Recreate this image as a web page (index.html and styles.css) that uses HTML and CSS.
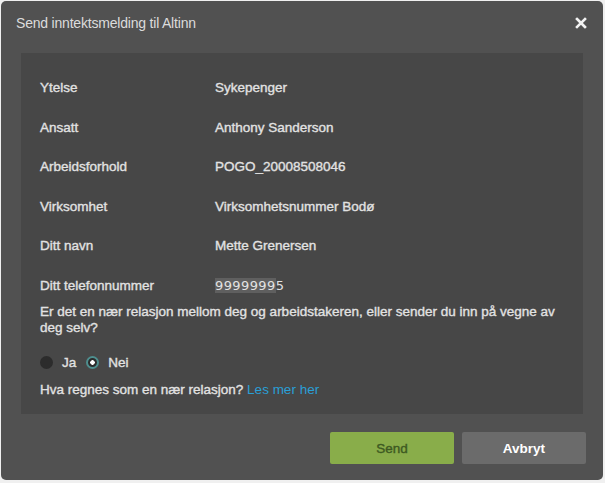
FILE: index.html
```html
<!DOCTYPE html>
<html lang="no">
<head>
<meta charset="UTF-8">
<meta name="viewport" content="width=device-width, initial-scale=1.0">
<title>Send inntektsmelding til Altinn</title>
<link rel="stylesheet" href="styles.css">
</head>
<body>
<div class="dialog">
    <div class="dialog-header">
        <h2>Send inntektsmelding til Altinn</h2>
        <svg class="close-btn" width="12" height="12" viewBox="0 0 12 12">
            <path d="M2 2 L10 10 M10 2 L2 10" stroke="#f2f2f2" stroke-width="2.6" stroke-linecap="square"/>
        </svg>
    </div>
    <div class="panel">
        <div class="info-row"><span class="label">Ytelse</span><span class="value">Sykepenger</span></div>
        <div class="info-row"><span class="label">Ansatt</span><span class="value">Anthony Sanderson</span></div>
        <div class="info-row"><span class="label">Arbeidsforhold</span><span class="value">POGO_20008508046</span></div>
        <div class="info-row"><span class="label">Virksomhet</span><span class="value">Virksomhetsnummer Bodø</span></div>
        <div class="info-row"><span class="label">Ditt navn</span><span class="value">Mette Grenersen</span></div>
        <div class="info-row"><span class="label">Ditt telefonnummer</span><span class="value phone"><span class="phone-mark">9999999</span>5</span></div>
        <p class="question">Er det en nær relasjon mellom deg og arbeidstakeren, eller sender du inn på vegne av deg selv?</p>
        <div class="radios">
            <label class="radio"><span class="dot"></span>Ja</label>
            <label class="radio"><span class="dot checked"></span>Nei</label>
        </div>
        <p class="help">Hva regnes som en nær relasjon? <a href="#">Les mer her</a></p>
    </div>
    <div class="dialog-footer">
        <button class="btn btn-send">Send</button>
        <button class="btn btn-cancel">Avbryt</button>
    </div>
</div>
</body>
</html>
```

FILE: styles.css
```css
body {
    font-family: "Liberation Sans", Arial, sans-serif;
    margin: 0;
    padding: 1px;
    background-color: #f0f0f0;
}
.dialog {
    width: 602px;
    height: 479px;
    box-sizing: border-box;
    background-color: #515151;
    border-radius: 5px;
    display: flex;
    flex-direction: column;
}
.dialog-header {
    height: 44px;
    padding: 0 16px 0 15px;
    display: flex;
    align-items: center;
    justify-content: space-between;
}
h2 {
    margin: 0;
    font-size: 14px;
    font-weight: normal;
    color: #dcdcdc;
    letter-spacing: -0.2px;
}
.panel {
    margin: 8px 20px 0 20px;
    height: 361px;
    box-sizing: border-box;
    background-color: #474747;
    padding: 15px 19px 0 19px;
    color: #e2e2e2;
    font-size: 13.5px;
    -webkit-text-stroke: 0.35px #e2e2e2;
}
.info-row {
    display: flex;
    height: 39.5px;
    align-items: center;
}
.label {
    width: 175px;
}
.phone {
    font-family: "DejaVu Sans", sans-serif;
    font-size: 13px;
    letter-spacing: 0.4px;
    -webkit-text-stroke: 0;
}
.phone-mark {
    background-color: #5f5f5f;
}
.question {
    margin: -1px 0 0 0;
    line-height: 16px;
}
.radios {
    display: flex;
    gap: 10px;
    margin-top: 17px;
    height: 18px;
    align-items: center;
}
.radio {
    display: flex;
    align-items: center;
    gap: 9px;
}
.dot {
    width: 13px;
    height: 13px;
    border-radius: 50%;
    background-color: #2c2c2c;
    box-sizing: border-box;
}
.dot.checked {
    border: 2px solid #4e8e8e;
    background: radial-gradient(circle, #ffffff 2px, #2c2c2c 2.5px);
}
.help {
    margin: 11px 0 0 0;
}
.help a {
    color: #2a9fd6;
    -webkit-text-stroke: 0;
    text-decoration: none;
}
.dialog-footer {
    display: flex;
    justify-content: flex-end;
    gap: 8px;
    padding: 18px 17px 0 0;
}
.btn {
    width: 124px;
    height: 32px;
    border: none;
    border-radius: 2px;
    font-family: "Liberation Sans", Arial, sans-serif;
    font-size: 13.5px;
}
.btn-send {
    background-color: #89ad4a;
    color: #3e5a22;
    -webkit-text-stroke: 0.4px #3e5a22;
}
.btn-cancel {
    background-color: #6b6b6b;
    color: #ffffff;
    font-weight: bold;
}
```
